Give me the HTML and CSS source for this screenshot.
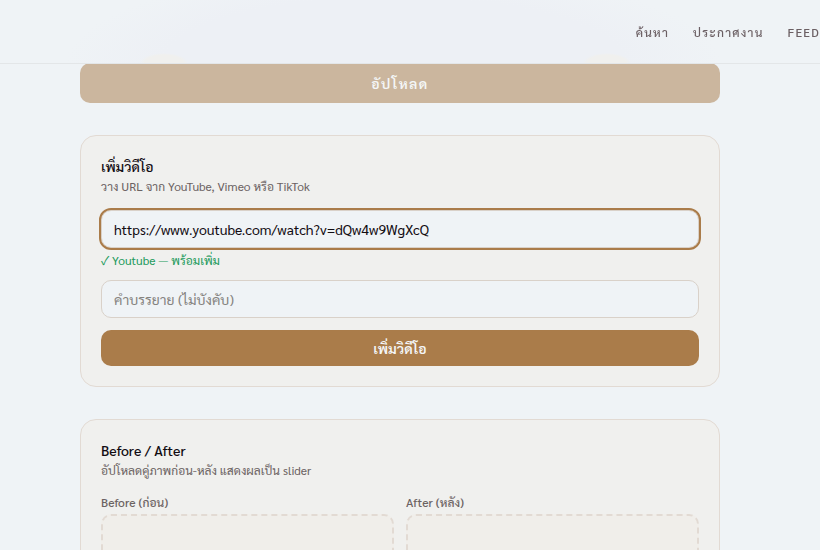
FILE: index.html
```html
<!DOCTYPE html>
<html lang="th">
<head>
    <meta charset="UTF-8">
    <meta name="viewport" content="width=device-width, initial-scale=1.0">
    <title>Portfolio</title>
    <link rel="stylesheet" href="styles.css">
</head>
<body>
    <header class="navbar">
        <nav class="menu">
            <a href="#search">ค้นหา</a>
            <a href="#jobs">ประกาศงาน</a>
            <a href="#feed">FEED</a>
        </nav>
    </header>

    <main class="contenido">
        <button class="btn btn-upload" type="button" disabled>อัปโหลด</button>

        <form class="card">
            <h2>เพิ่มวิดีโอ</h2>
            <p class="hint">วาง URL จาก YouTube, Vimeo หรือ TikTok</p>
            <input class="campo activo" type="url" id="videoUrl" name="videoUrl" aria-label="URL" value="https://www.youtube.com/watch?v=dQw4w9WgXcQ">
            <p class="status"><span class="check">✓</span> Youtube — พร้อมเพิ่ม</p>
            <input class="campo" type="text" id="caption" name="caption" aria-label="คำบรรยาย" placeholder="คำบรรยาย (ไม่บังคับ)">
            <button class="btn btn-add" type="submit">เพิ่มวิดีโอ</button>
        </form>

        <form class="card">
            <h2>Before / After</h2>
            <p class="hint">อัปโหลดคู่ภาพก่อน-หลัง แสดงผลเป็น slider</p>
            <div class="pair">
                <div>
                    <label for="before">Before (ก่อน)</label>
                    <button class="drop" type="button" id="before"></button>
                </div>
                <div>
                    <label for="after">After (หลัง)</label>
                    <button class="drop" type="button" id="after"></button>
                </div>
            </div>
        </form>
    </main>
</body>
</html>
```
FILE: styles.css
```css
* {
    box-sizing: border-box;
}
html {
    overflow: hidden;
}
body {
    margin: 0;
    background-color: #eff3f6;
    color: #120c12;
    font-family: "Sarabun", "Noto Sans Thai", "Open Sans", "Noto Sans", sans-serif;
    font-size: 14px;
    line-height: 20px;
}
h2, p {
    margin: 0;
}

/* header */
.navbar {
    position: fixed;
    top: 0;
    left: 0;
    right: 0;
    height: 64px;
    display: flex;
    align-items: center;
    justify-content: flex-end;
    background:
        radial-gradient(24px 10px at 20% 100%, #f0f0ee 80%, transparent),
        radial-gradient(24px 10px at 74% 100%, #f0f0ee 80%, transparent),
        radial-gradient(40% 150% at 48% 100%, #edf0f5 70%, #eff3f6);
    border-bottom: 1px solid #e3e6e8;
}
.menu {
    display: flex;
    gap: 24px;
}
.menu a {
    color: #6b5f63;
    font-size: 12px;
    font-weight: 500;
    letter-spacing: 0.1em;
    text-decoration: none;
    white-space: nowrap;
}

/* content */
.contenido {
    display: flex;
    flex-direction: column;
    gap: 32px;
    padding: 63px 100px 0 80px;
}
.btn {
    width: 100%;
    border: none;
    border-radius: 10px;
    background-color: #aa7c4a;
    color: #f4f6f7;
    font-family: inherit;
    font-size: 14px;
    font-weight: 600;
    line-height: 20px;
    cursor: pointer;
}
.btn-upload {
    padding: 10px;
    background-color: #cbb69e;
    letter-spacing: 0.1em;
}
.btn-add {
    padding: 8px;
}
.card {
    padding: 20px;
    border: 1px solid #e2dad3;
    border-radius: 16px;
    background-color: #f0f0ee;
}
h2 {
    font-size: 14px;
    font-weight: 500;
    line-height: 20px;
}
.hint {
    margin-bottom: 14px;
    color: #6b6262;
    font-size: 12px;
    line-height: 20px;
}
.campo {
    display: block;
    width: 100%;
    height: 38px;
    padding: 8px 12px;
    margin-bottom: 12px;
    border: 1px solid #d9d1c9;
    border-radius: 10px;
    background-color: #eff3f6;
    color: #120c12;
    font-family: inherit;
    font-size: 14px;
    line-height: 20px;
}
.campo::placeholder {
    color: #858380;
}
.activo {
    margin-bottom: 4px;
    outline: 2px solid #aa7c4a;
}
.status {
    margin-bottom: 12px;
    color: #229a5c;
    font-size: 12px;
    line-height: 16px;
}
.check {
    font-family: "Noto Sans CJK JP", sans-serif;
    line-height: 1;
}
.pair {
    display: grid;
    grid-template-columns: 1fr 1fr;
    gap: 12px;
}
.pair label {
    display: block;
    margin-bottom: 4px;
    color: #6b6262;
    font-size: 12px;
    font-weight: 500;
    line-height: 16px;
}
.drop {
    display: block;
    width: 100%;
    height: 160px;
    border: 2px dashed #e2dad3;
    border-radius: 10px;
    background-color: #f0eeea;
}
```
